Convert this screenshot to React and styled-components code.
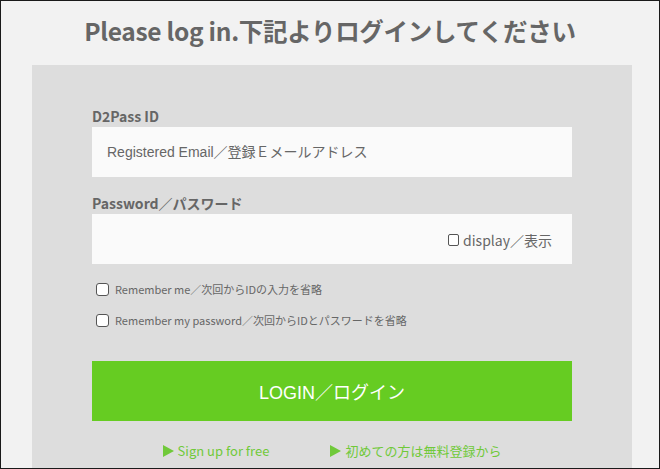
import React, { useState } from 'react'
import styled, { createGlobalStyle } from 'styled-components'

const GlobalStyle = createGlobalStyle`
  html, body {
    margin: 0;
    padding: 0;
    background: #f2f2f2;
  }
  * { box-sizing: border-box; }
`

const Page = styled.div`
  width: 660px;
  height: 469px;
  overflow: hidden;
  border: 1px solid #1a1a1a;
  background: #f2f2f2;
  font-family: "Noto Sans CJK JP", sans-serif;
  color: #666;
`

const Title = styled.h1`
  margin: 0;
  height: 64px;
  padding-bottom: 5px;
  display: flex;
  align-items: center;
  justify-content: center;
  font-size: 24.5px;
  font-weight: 700;
  color: #666;
  letter-spacing: -0.3px;
`

const Panel = styled.div`
  margin: 0 27px 0 31px;
  background: #dddddd;
  padding: 41px 60px 0;
  height: 420px;
`

const Label = styled.div`
  font-size: 14px;
  font-weight: 700;
  line-height: 20px;
  margin-bottom: 1px;
  color: #666;
`

const Field = styled.div`
  height: 50px;
  background: #fafafa;
  display: flex;
  align-items: center;
  justify-content: ${p => (p.$end ? 'flex-end' : 'flex-start')};
  padding: 0 20px 0 15px;
  margin-bottom: ${p => p.$gap || 0}px;
`

const Placeholder = styled.span`
  font-family: "Liberation Sans", "Noto Sans CJK JP", sans-serif;
  font-size: 14px;
  color: #666;
  margin-top: -3px;
`

const Show = styled.label`
  display: flex;
  align-items: center;
  gap: 4px;
  font-size: 14px;
  color: #666;
  margin-top: 2px;
`

const Box = styled.span`
  width: 11px;
  height: 12px;
  border: 1px solid #555;
  border-radius: 2px;
  background: #fff;
  display: inline-block;
`

const Checks = styled.div`
  margin-top: 17px;
  display: flex;
  flex-direction: column;
  gap: 15px;
`

const CheckRow = styled.label`
  display: flex;
  align-items: center;
  gap: 6px;
  padding-left: 4px;
  font-size: 11px;
  line-height: 16px;
  color: #666;
`

const BigBox = styled.span`
  width: 13px;
  height: 13px;
  border: 1px solid #555;
  border-radius: 3px;
  background: #fff;
  display: inline-block;
`

const LoginButton = styled.button`
  margin-top: 33px;
  width: 100%;
  height: 60px;
  border: none;
  background: #66cc22;
  color: #fff;
  font-family: "Liberation Sans", "Noto Sans CJK JP", sans-serif;
  font-size: 18px;
  cursor: pointer;
`

const Links = styled.div`
  display: flex;
  justify-content: center;
  gap: 61px;
  margin-top: 20px;
`

const Link = styled.a`
  display: flex;
  align-items: center;
  gap: 4px;
  font-size: 13px;
  color: #70c93a;
  text-decoration: none;
`

const Arrow = () => (
  <svg width="11" height="12" viewBox="0 0 11 12">
    <polygon points="0,0 11,6 0,12" fill="#70c93a" />
  </svg>
)

export default function App() {
  const [remember, setRemember] = useState({ me: false, pass: false })

  return (
    <>
      <GlobalStyle />
      <Page>
        <Title>Please log in.下記よりログインしてください</Title>
        <Panel>
          <Label>D2Pass ID</Label>
          <Field $gap={16}>
            <Placeholder>Registered Email／登録Ｅメールアドレス</Placeholder>
          </Field>
          <Label>Password／パスワード</Label>
          <Field $end>
            <Show>
              <Box />
              display／表示
            </Show>
          </Field>
          <Checks>
            <CheckRow onClick={() => setRemember({ ...remember, me: !remember.me })}>
              <BigBox />
              Remember me／次回からIDの入力を省略
            </CheckRow>
            <CheckRow onClick={() => setRemember({ ...remember, pass: !remember.pass })}>
              <BigBox />
              Remember my password／次回からIDとパスワードを省略
            </CheckRow>
          </Checks>
          <LoginButton>LOGIN／ログイン</LoginButton>
          <Links>
            <Link href="#">
              <Arrow />
              Sign up for free
            </Link>
            <Link href="#">
              <Arrow />
              初めての方は無料登録から
            </Link>
          </Links>
        </Panel>
      </Page>
    </>
  )
}
